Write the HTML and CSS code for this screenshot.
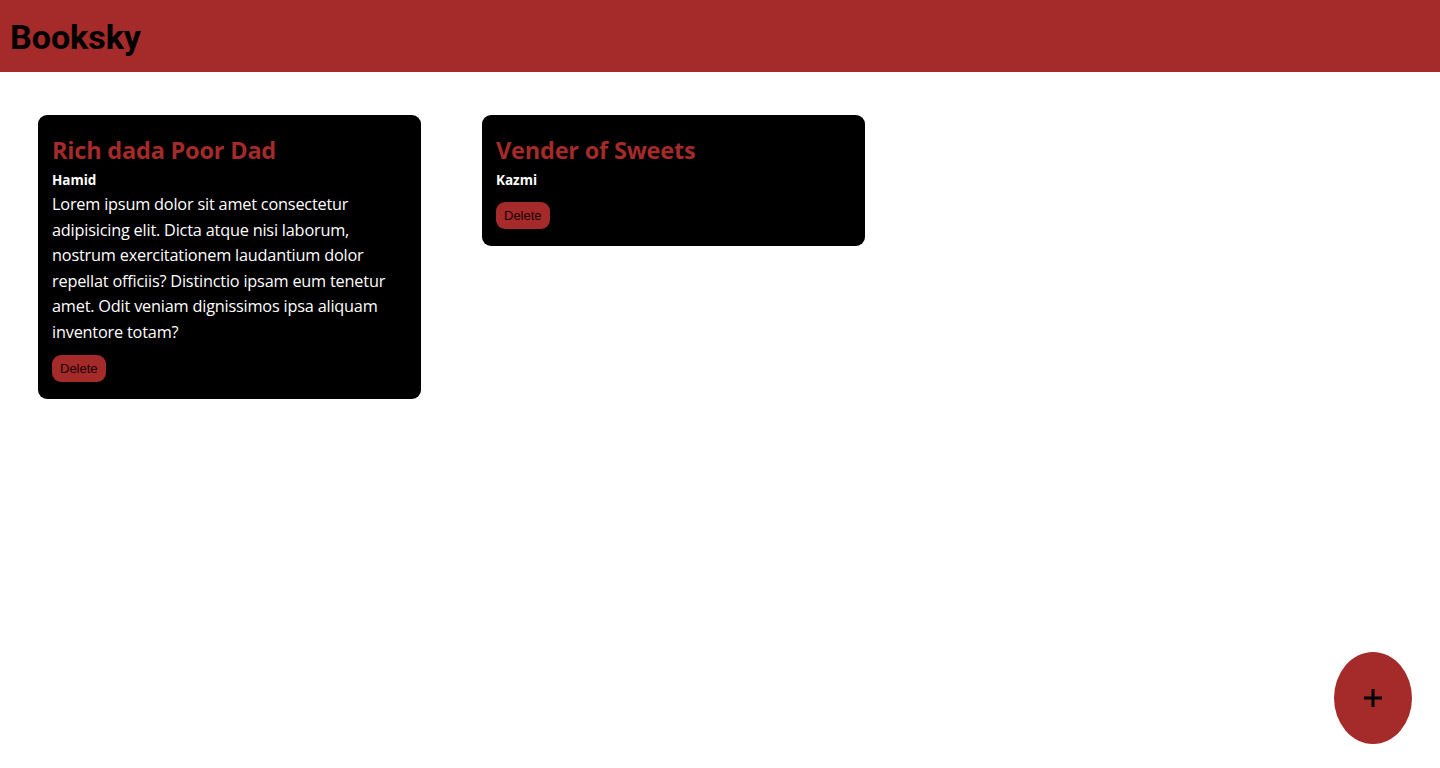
FILE: index.html
```html
<!DOCTYPE html>
<html lang="en">
<head>
<meta charset="utf-8">
<title>Booksky</title>
<link rel="stylesheet" href="styles.css">
</head>
<body>
<header class="topbar">
  <h1 class="brand">Booksky</h1>
</header>
<main class="books">
  <article class="card">
    <h2 class="card-title">Rich dada Poor Dad</h2>
    <p class="card-author">Hamid</p>
    <p class="card-text">Lorem ipsum dolor sit amet consectetur adipisicing elit. Dicta atque nisi laborum, nostrum exercitationem laudantium dolor repellat officiis? Distinctio ipsam eum tenetur amet. Odit veniam dignissimos ipsa aliquam inventore totam?</p>
    <button class="btn-delete">Delete</button>
  </article>
  <article class="card">
    <h2 class="card-title">Vender of Sweets</h2>
    <p class="card-author">Kazmi</p>
    <button class="btn-delete">Delete</button>
  </article>
</main>
<button class="fab" aria-label="Add book">
  <svg width="22" height="22" viewBox="0 0 22 22"><path d="M11 2v18M2 11h18" stroke="#000" stroke-width="3" fill="none"/></svg>
</button>
</body>
</html>
```
FILE: styles.css
```css
* { box-sizing: border-box; }
html, body { margin: 0; padding: 0; }
body {
  font-family: "Open Sans", "Noto Sans", sans-serif;
  background: #fff;
  color: #000;
  min-height: 768px;
}
.topbar {
  background: #a52a2a;
  height: 72px;
  display: flex;
  align-items: center;
  padding: 0 10px;
}
.brand {
  margin: 0;
  font-family: Roboto, "Liberation Sans", sans-serif;
  font-weight: 700;
  font-size: 34px;
  letter-spacing: 0;
  color: #000;
  padding-top: 2px;
}
.books {
  display: flex;
  align-items: flex-start;
  gap: 61px;
  padding: 43px 38px;
}
.card {
  width: 383px;
  background: #000;
  border-radius: 9px;
  padding: 16px 14px 17px;
  display: flex;
  flex-direction: column;
  align-items: flex-start;
}
.card-title {
  margin: 0;
  font-size: 23.5px;
  font-weight: 700;
  line-height: 38px;
  color: #a52a2a;
  letter-spacing: -0.2px;
}
.card-author {
  margin: 0;
  font-size: 13.5px;
  font-weight: 700;
  color: #fff;
  line-height: 22px;
}
.card-text {
  margin: 1px 0 0;
  font-size: 16.3px;
  line-height: 25.5px;
  color: #fff;
  letter-spacing: -0.2px;
}
.btn-delete {
  margin-top: 11px;
  border: none;
  background: #a52a2a;
  color: #1a0000;
  font-family: "Liberation Sans", Arial, sans-serif;
  font-size: 13px;
  height: 27px;
  padding: 0 8px;
  border-radius: 9px;
  cursor: pointer;
}
.card-text + .btn-delete { margin-top: 10px; }
.fab {
  position: fixed;
  left: 1334px;
  top: 652px;
  width: 78px;
  height: 92px;
  border-radius: 50%;
  border: none;
  background: #a52a2a;
  display: flex;
  align-items: center;
  justify-content: center;
  padding: 0;
  cursor: pointer;
}
```
